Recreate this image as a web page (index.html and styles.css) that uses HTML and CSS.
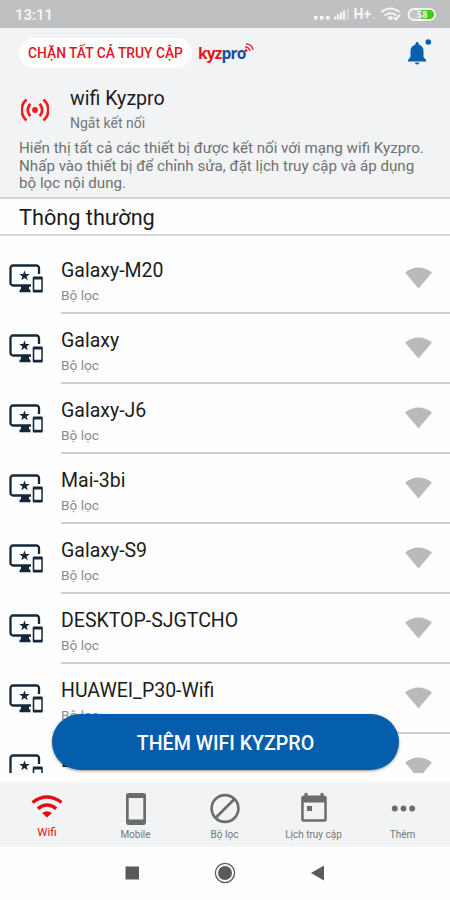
FILE: index.html
```html
<!DOCTYPE html>
<html lang="vi">
<head>
    <meta charset="UTF-8">
    <meta name="viewport" content="width=device-width, initial-scale=1.0">
    <title>Kyzpro</title>
    <link rel="stylesheet" href="styles.css">
</head>
<body>
    <!-- shared icons -->
    <svg class="sprite" width="0" height="0">
        <symbol id="device" viewBox="0 0 34 30">
            <path d="M30 10V4a2.500 2.500 0 0 0-2.500-2.500H4A2.500 2.500 0 0 0 1.500 4v15A2.500 2.500 0 0 0 4 21.500H22" fill="none" stroke="#14283a" stroke-width="2.300"/>
            <path d="M12 22h8v3l1.500 1v2.300h-11V26l1.500-1z" fill="#14283a"/>
            <path d="M15.500 6.500l1.300 3.600h4l-3.200 2.300 1.200 3.800-3.300-2.300-3.300 2.300 1.200-3.800-3.200-2.300h4z" fill="#14283a"/>
            <path d="M25 12.500h7.500a1.300 1.300 0 0 1 1.300 1.300v13.400a1.300 1.300 0 0 1-1.300 1.300H25a1.300 1.300 0 0 1-1.300-1.300V13.800a1.300 1.300 0 0 1 1.300-1.300zm.3 3v10.200h7V15.500z" fill="#14283a" fill-rule="evenodd"/>
        </symbol>
        <symbol id="signal" viewBox="0 0 27 22">
            <path d="M0 5.500Q13.500-4.500 27 5.500L13.500 21.500z" fill="#bababa"/>
        </symbol>
    </svg>

    <div class="status-bar">
        <span class="clock">13:11</span>
        <div class="status-icons">
            <svg width="124" height="20" viewBox="0 0 124 20">
                <g fill="#f5f5f5">
                    <rect x="0" y="12" width="3.500" height="3.500"/>
                    <rect x="6" y="12" width="3.500" height="3.500"/>
                    <rect x="12" y="12" width="3.500" height="3.500"/>
                    <rect x="20" y="12.500" width="2.300" height="3"/>
                    <rect x="23" y="10.500" width="2.300" height="5"/>
                    <rect x="26" y="8.500" width="2.300" height="7"/>
                    <rect x="29" y="6.500" width="2.300" height="9"/>
                    <rect x="33" y="4.500" width="2" height="11" opacity=".45"/>
                    <text x="39.500" y="15" class="network">H+</text>
                    <rect x="59" y="13" width="2" height="2" opacity=".5"/>
                    <path d="M73.500 13.500l3 3 3-3a4 4 0 0 0-6 0z"/>
                </g>
                <g fill="none" stroke="#f5f5f5" stroke-width="2">
                    <path d="M67.500 8q9-7 18 0M70.500 11.500q6-4.500 12 0M80 13.500l2 2 4-5"/>
                </g>
                <rect x="94.500" y="5" width="26.500" height="11" rx="5.500" fill="#c5c5c5" stroke="#f5f5f5" stroke-width="2"/>
                <path d="M107 6h8.500a4.500 4.500 0 0 1 0 9H107z" fill="#44c81c"/>
                <text x="103" y="14" class="battery">58</text>
            </svg>
        </div>
    </div>

    <header class="header">
        <div class="toolbar">
            <button class="block-all">CHẶN TẤT CẢ TRUY CẬP</button>
            <div class="logo">
                <span class="logo-red">kyz</span><span class="logo-blue">pro</span>
                <svg class="logo-waves" width="10" height="10" viewBox="0 0 10 10" fill="none" stroke="#ec2630" stroke-width="1.500">
                    <path d="M2 1q6 0 7 6M1 4q4 0 5 4"/>
                    <circle cx="2" cy="7.500" r=".8"/>
                </svg>
            </div>
            <svg class="bell" width="26" height="28" viewBox="0 0 26 28" fill="#0560ae">
                <path d="M7.500 5.500V4.500a1.600 1.600 0 0 1 3.200 0v1Q15.500 7 15.500 12v6l2.500 3v1.500H0V21l2.500-3v-6q0-5 5-6.500z"/>
                <path d="M7 23.500h4.200a2.100 2.100 0 0 1-4.200 0z"/>
                <circle cx="20.300" cy="3" r="2.800"/>
            </svg>
        </div>
        <div class="wifi-info">
            <svg class="hotspot" width="28" height="24" viewBox="0 0 28 24" fill="none" stroke="#ee1c1c" stroke-width="2.700">
                <circle cx="14" cy="12" r="2.900" fill="#ee1c1c" stroke="none"/>
                <path d="M9.500 6a8 8 0 0 0 0 12M18.500 6a8 8 0 0 1 0 12M5.500 1.500a14 14 0 0 0 0 21M22.500 1.500a14 14 0 0 1 0 21"/>
            </svg>
            <div>
                <div class="wifi-name">wifi Kyzpro</div>
                <div class="wifi-state">Ngắt kết nối</div>
            </div>
        </div>
        <p class="description">Hiển thị tất cả các thiết bị được kết nối với mạng wifi Kyzpro.<br>Nhấp vào thiết bị để chỉnh sửa, đặt lịch truy cập và áp dụng<br>bộ lọc nội dung.</p>
    </header>

    <h2 class="section-title"><span>Thông thường</span></h2>

    <main class="devices">
        <ul class="device-list" id="device-list"></ul>
        <button class="add-wifi"><span>THÊM WIFI KYZPRO</span></button>
    </main>

    <nav class="tabs">
        <a class="tab active">
            <svg width="32" height="32" viewBox="0 0 32 32" fill="none" stroke="#e60d12" stroke-width="3.400">
                <path d="M1.500 9.500Q16-1.500 30.500 9.500M6.800 15.800q9.200-7.500 18.400 0"/>
                <path d="M11 20q5-3.500 10 0l-5 4.500z" fill="#e60d12" stroke="none"/>
            </svg>
            <span>Wifi</span>
        </a>
        <a class="tab">
            <svg width="32" height="32" viewBox="0 0 32 32" fill="#6c6c6c">
                <path d="M8.500 0h15A2.500 2.500 0 0 1 26 2.500v27a2.500 2.500 0 0 1-2.500 2.500h-15A2.500 2.500 0 0 1 6 29.500v-27A2.500 2.500 0 0 1 8.500 0zM8.700 5v21.500h14.600V5z" fill-rule="evenodd"/>
            </svg>
            <span>Mobile</span>
        </a>
        <a class="tab">
            <svg width="32" height="32" viewBox="0 0 32 32" fill="none" stroke="#6c6c6c" stroke-width="2.600">
                <circle cx="16" cy="15.500" r="13.400"/>
                <path d="M6.500 25L25.500 6"/>
            </svg>
            <span>Bộ lọc</span>
        </a>
        <a class="tab">
            <svg width="32" height="32" viewBox="0 0 32 32" fill="#6c6c6c">
                <path d="M6.500 0h3v2.500h13V0h3v2.500h.8a2.500 2.500 0 0 1 2.500 2.500v21.300a2.500 2.500 0 0 1-2.500 2.500H5.700a2.500 2.500 0 0 1-2.500-2.500V5a2.500 2.500 0 0 1 2.500-2.500h.8zM5.700 9.500v16.800h20.600V9.500z" fill-rule="evenodd"/>
                <rect x="9" y="13" width="5" height="5"/>
            </svg>
            <span>Lịch truy cập</span>
        </a>
        <a class="tab">
            <svg width="32" height="32" viewBox="0 0 32 32" fill="#6c6c6c">
                <circle cx="7.800" cy="15.500" r="2.900"/>
                <circle cx="16.500" cy="15.500" r="2.900"/>
                <circle cx="25.200" cy="15.500" r="2.900"/>
            </svg>
            <span>Thêm</span>
        </a>
    </nav>

    <footer class="system-nav">
        <svg width="22" height="22" viewBox="0 0 22 22"><rect x="4.500" y="4.500" width="13.500" height="13" fill="#5a5a5a"/></svg>
        <svg width="22" height="22" viewBox="0 0 22 22">
            <circle cx="11" cy="11" r="9.600" fill="none" stroke="#5a5a5a" stroke-width="1.300"/>
            <circle cx="11" cy="11" r="7" fill="#5a5a5a"/>
        </svg>
        <svg width="22" height="22" viewBox="0 0 22 22"><path d="M4 11l13-7.500v15z" fill="#5a5a5a"/></svg>
    </footer>

    <script src="script.js"></script>
</body>
</html>
```
FILE: styles.css
```css
* {
    box-sizing: border-box;
}

body {
    margin: 0;
    height: 900px;
    overflow: hidden;
    display: flex;
    flex-direction: column;
    font-family: Roboto, "Noto Sans", sans-serif;
    background-color: #fefefe;
    color: #1c1c1c;
}

button {
    border: none;
    font-family: inherit;
    padding: 0;
}

.sprite {
    position: absolute;
}

.status-bar {
    height: 28px;
    flex: none;
    display: flex;
    justify-content: space-between;
    background-color: #bfc0c1;
    padding: 4px 12px 0 15px;
}

.clock {
    font-size: 15px;
    font-weight: 500;
    line-height: 22px;
    color: #f8f8f8;
}

.network {
    font-size: 14px;
    font-weight: 700;
}

.battery {
    font-size: 9px;
    font-weight: 700;
    fill: #f5f5f5;
}

.header {
    height: 171px;
    flex: none;
    background-color: #f1f3f5;
    border-bottom: 2px solid #d5d6d7;
}

.toolbar {
    display: flex;
    align-items: flex-start;
    padding: 10px 18px 0 19px;
    height: 52px;
}

.block-all {
    width: 173px;
    height: 30px;
    border-radius: 15px;
    background-color: #fff;
    color: #e3141c;
    font-size: 13.800px;
    font-weight: 500;
    white-space: nowrap;
}

.logo {
    display: flex;
    margin-left: 6px;
    font-family: "Open Sans", sans-serif;
    font-size: 15.500px;
    font-weight: 700;
    line-height: 30px;
    letter-spacing: -0.800px;
}

.logo-red {
    color: #e3141c;
}

.logo-blue {
    color: #164d9f;
}

.logo-waves {
    margin: 5px 0 0 -2px;
}

.bell {
    margin-left: auto;
    margin-right: -2px;
    margin-top: 1px;
}

.wifi-info {
    display: flex;
    padding-left: 21px;
}

.hotspot {
    margin: 18px 21px 0 0;
}

.wifi-name {
    font-size: 19.600px;
    line-height: 24px;
    margin-top: 7px;
}

.wifi-state {
    font-size: 14px;
    line-height: 18px;
    margin-top: 3px;
    color: #777;
}

.description {
    margin: 8px 0 0 19px;
    font-size: 15.150px;
    line-height: 17.500px;
    color: #707070;
    white-space: nowrap;
}

.section-title {
    height: 37px;
    flex: none;
    margin: 0;
    padding-left: 19px;
    border-bottom: 2px solid #d5d6d7;
    font-size: 21.700px;
    font-weight: 400;
    line-height: 37px;
}

.devices {
    height: 537px;
    flex: none;
    position: relative;
    overflow: hidden;
    padding-top: 8px;
}

.device-list {
    list-style-type: none;
    margin: 0;
    padding: 0;
}

.device {
    height: 70px;
    display: flex;
    padding-left: 9px;
}

.device-icon {
    width: 34px;
    height: 30px;
    margin: 20px 18px 0 0;
    flex: none;
}

.device-body {
    flex: 1;
    display: flex;
    justify-content: space-between;
    border-bottom: 2px solid #cfcfcf;
}

.device-name {
    font-size: 19.500px;
    line-height: 24px;
    margin-top: 15px;
}

.device-filter {
    font-size: 13.700px;
    line-height: 18px;
    margin-top: 3px;
    color: #8b8b8b;
}

.device:last-child .device-filter {
    display: none;
}

.signal-icon {
    width: 27px;
    height: 22px;
    margin: 23px 18px 0 0;
}

/* floating over the list */
.add-wifi {
    position: absolute;
    left: 52px;
    bottom: 3px;
    width: 347px;
    height: 56px;
    border-radius: 28px;
    background-color: #055eac;
    color: #fff;
    font-size: 19.600px;
    font-weight: 500;
    padding-top: 2px;
    box-shadow: 0 1px 3px rgba(0, 0, 0, 0.4);
}

.tabs {
    height: 65px;
    flex: none;
    margin-top: 9px;
    display: grid;
    grid-template-columns: 91px repeat(4, 89px);
    background-color: #f1f3f5;
}

.tab {
    display: flex;
    flex-direction: column;
    align-items: center;
    padding-top: 11px;
    font-size: 10px;
    line-height: 14px;
    color: #777;
}

.tab span {
    margin-top: 3px;
}

.tab.active {
    color: #e60d12;
    font-size: 11.500px;
    padding-left: 3px;
}

.tab.active span {
    margin-top: 0;
}

.system-nav {
    display: flex;
    justify-content: center;
    gap: 71px;
    padding-top: 15px;
}
```
FILE: script.js
```js
const devices = ['Galaxy-M20', 'Galaxy', 'Galaxy-J6', 'Mai-3bi', 'Galaxy-S9', 'DESKTOP-SJGTCHO', 'HUAWEI_P30-Wifi', 'DESKTOP'];
const list = document.getElementById('device-list');

devices.forEach(function (name) {
    const item = document.createElement('li');
    item.className = 'device';
    item.innerHTML = `
        <svg class="device-icon"><use href="#device"/></svg>
        <div class="device-body">
            <div>
                <div class="device-name">${name}</div>
                <div class="device-filter">Bộ lọc</div>
            </div>
            <svg class="signal-icon"><use href="#signal"/></svg>
        </div>`;
    list.appendChild(item);
});
```
